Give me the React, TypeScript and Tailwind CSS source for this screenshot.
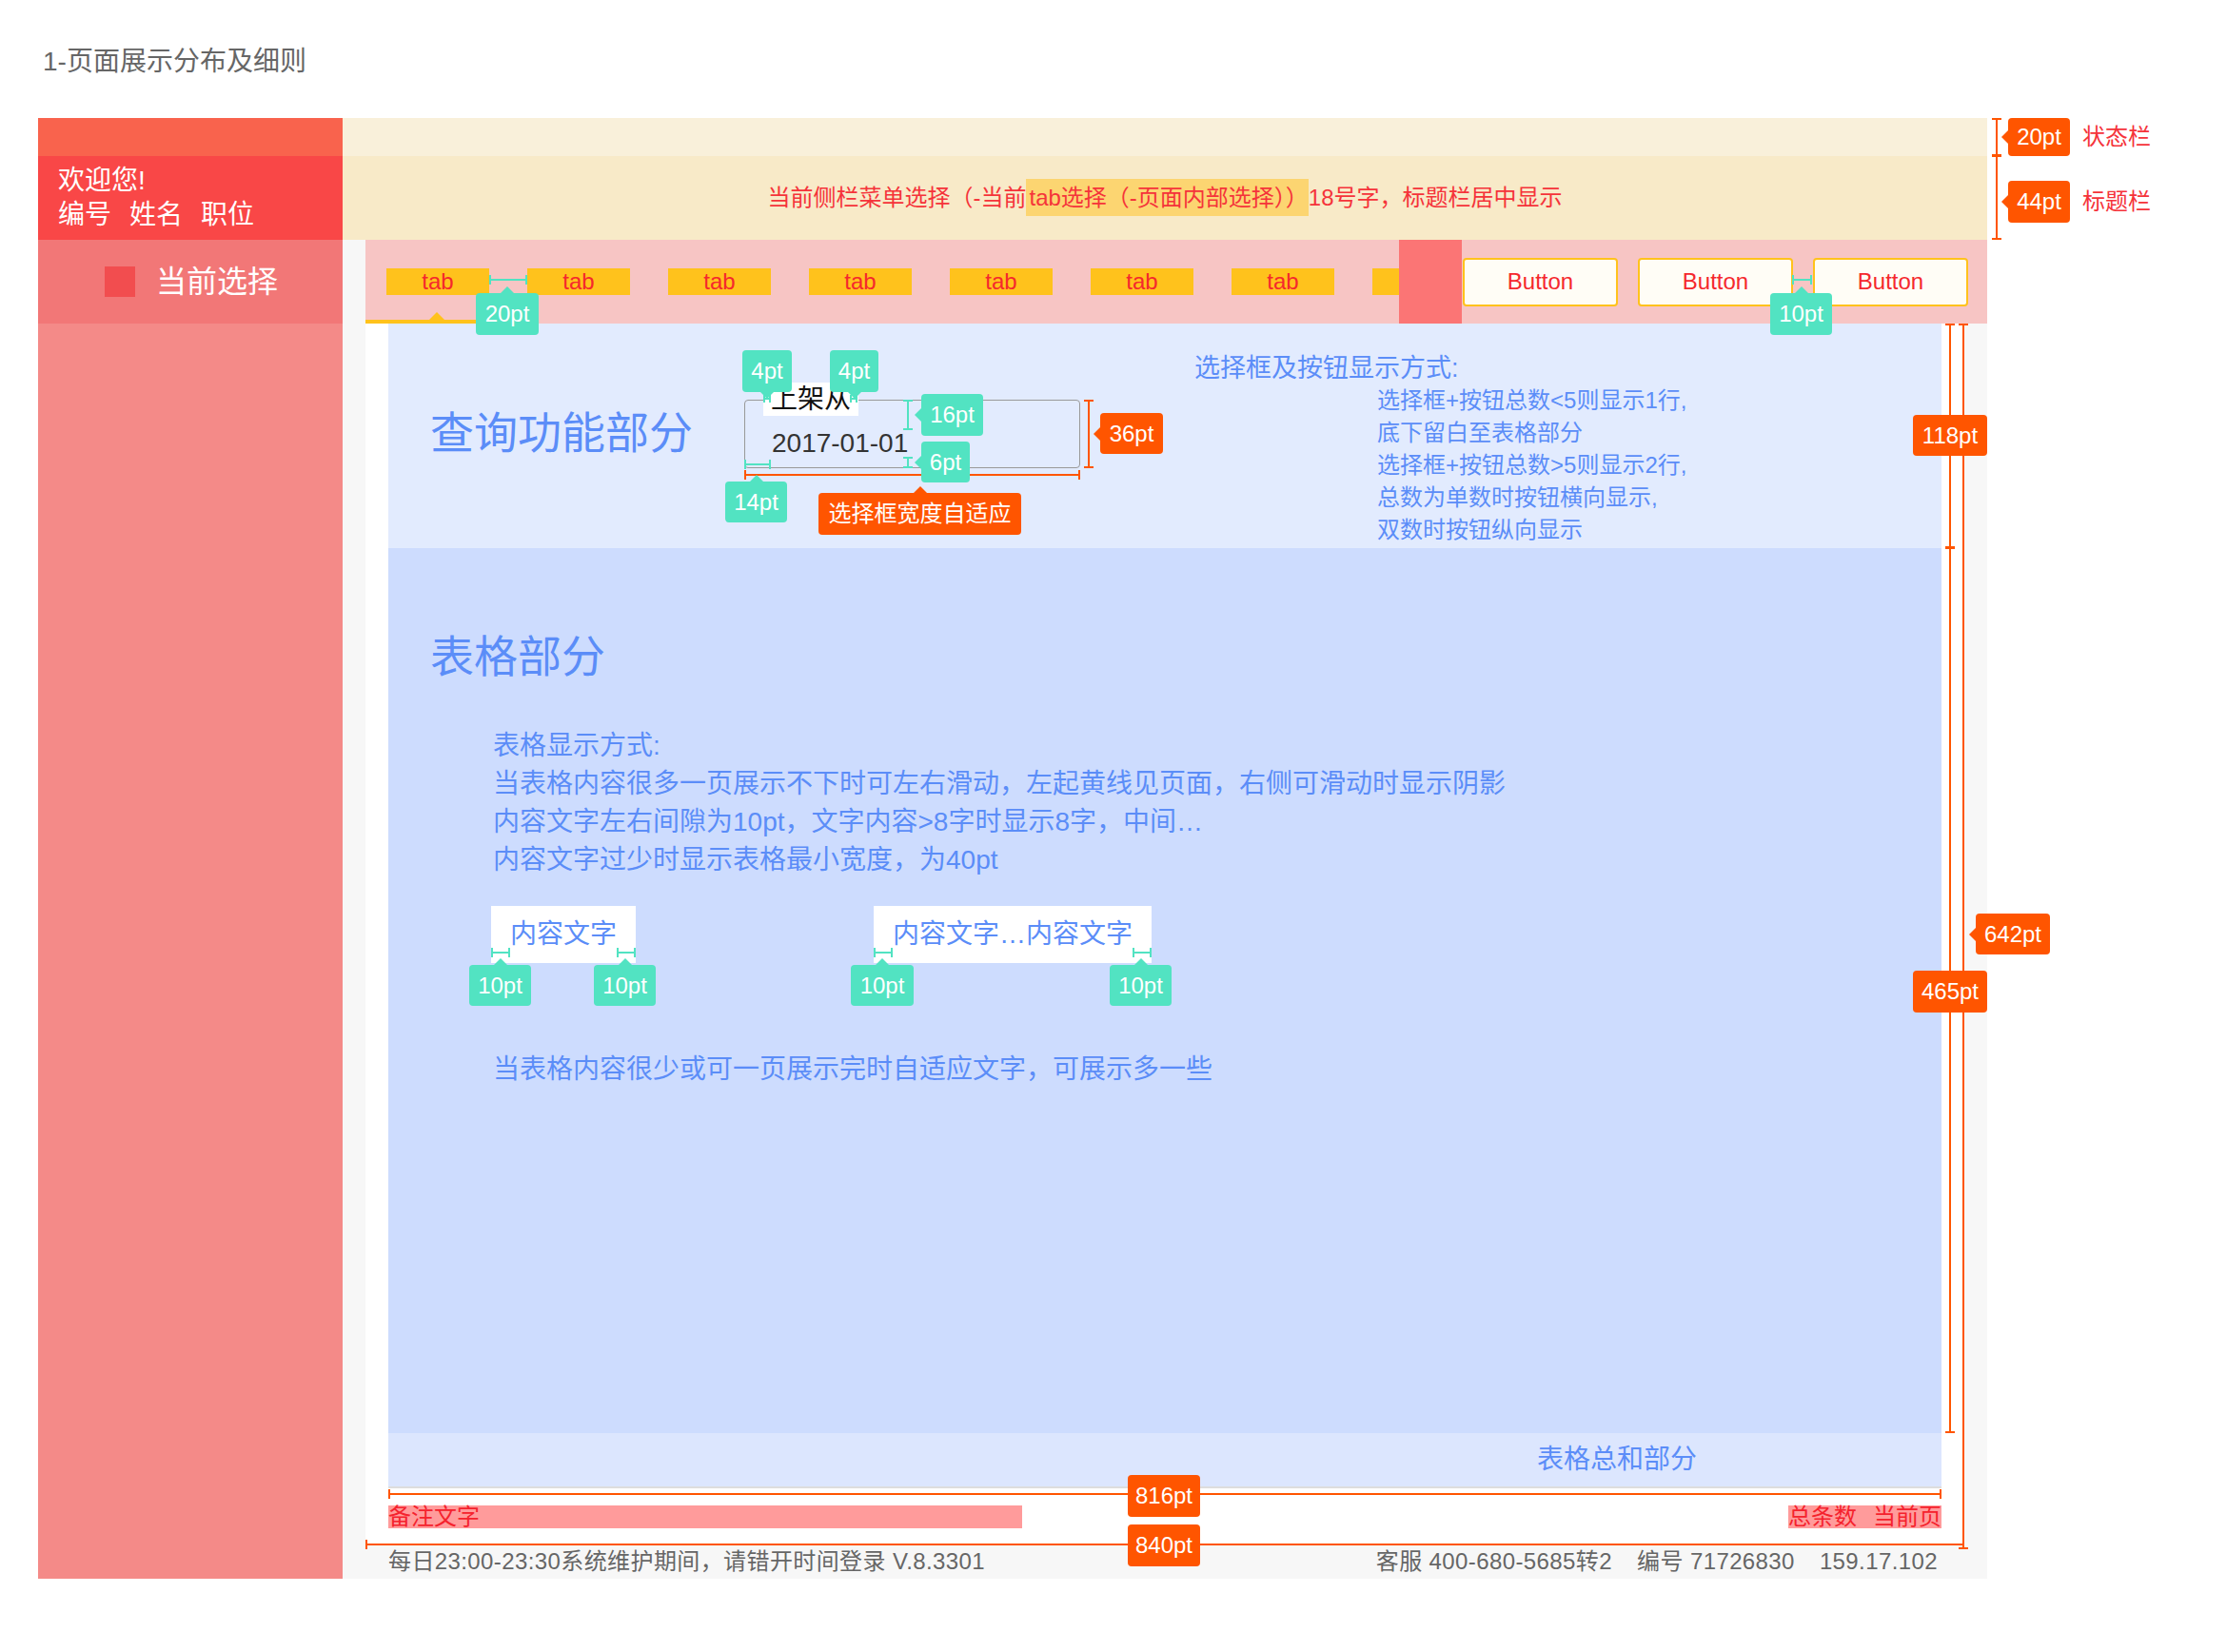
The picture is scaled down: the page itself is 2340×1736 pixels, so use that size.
import clsx from 'clsx';

type Tone = 'teal' | 'orange';
type Side = 'top' | 'bottom' | 'left' | 'none';

// measurement label
function Tag({ text, tone, side = 'none', className }: { text: string; tone: Tone; side?: Side; className: string }) {
  const teal = tone === 'teal';
  return (
    <div
      className={clsx(
        'absolute z-20 flex items-center justify-center rounded-[4px] text-[24px] leading-none text-white',
        teal ? 'bg-[#52E3C2]' : 'bg-[#FF5500]',
        className,
      )}
    >
      {text}
      {side === 'top' && (
        <span className={clsx('absolute left-1/2 top-[-7px] -translate-x-1/2 border-x-[7px] border-b-[7px] border-x-transparent', teal ? 'border-b-[#52E3C2]' : 'border-b-[#FF5500]')} />
      )}
      {side === 'bottom' && (
        <span className={clsx('absolute bottom-[-7px] left-1/2 -translate-x-1/2 border-x-[7px] border-t-[7px] border-x-transparent', teal ? 'border-t-[#52E3C2]' : 'border-t-[#FF5500]')} />
      )}
      {side === 'left' && (
        <span className={clsx('absolute left-[-7px] top-1/2 -translate-y-1/2 border-y-[7px] border-r-[7px] border-y-transparent', teal ? 'border-r-[#52E3C2]' : 'border-r-[#FF5500]')} />
      )}
    </div>
  );
}

// horizontal dimension line with end ticks
function HSpan({ tone, className }: { tone: Tone; className: string }) {
  const teal = tone === 'teal';
  return (
    <div className={clsx('absolute z-10 flex items-center border-x-2', teal ? 'border-[#52E3C2]' : 'border-[#FF5500]', className)}>
      <div className={clsx('h-[2px] w-full', teal ? 'bg-[#52E3C2]' : 'bg-[#FF5500]')} />
    </div>
  );
}

// vertical dimension line with end ticks
function VSpan({ tone, className }: { tone: Tone; className: string }) {
  const teal = tone === 'teal';
  return (
    <div className={clsx('absolute z-10 flex justify-center border-y-2', teal ? 'border-[#52E3C2]' : 'border-[#FF5500]', className)}>
      <div className={clsx('h-full w-[2px]', teal ? 'bg-[#52E3C2]' : 'bg-[#FF5500]')} />
    </div>
  );
}

export default function App() {
  return (
    <div className="relative h-[1736px] w-[2340px] overflow-hidden bg-white font-['Liberation_Sans','Noto_Sans_CJK_SC',sans-serif]">
      <h1 className="h-[124px] pl-[45px] pt-[49px] text-[28px] font-normal leading-[32px] text-[#666]">1-页面展示分布及细则</h1>

      <div className="ml-[40px] flex h-[1535px] w-[2048px]">
        {/* Sidebar */}
        <aside className="flex w-[320px] flex-col text-white">
          <div className="h-[40px] bg-[#F9634D]" />
          <div className="flex h-[88px] flex-col justify-center bg-[#F94747] pl-[21px] text-[28px] leading-[36px]">
            <div>欢迎您!</div>
            <div className="flex gap-[19px]">
              <span>编号</span>
              <span>姓名</span>
              <span>职位</span>
            </div>
          </div>
          <div className="flex h-[88px] items-center gap-[22px] bg-[#F27777] pl-[70px]">
            <span className="h-[32px] w-[32px] bg-[#F24D4F]" />
            <span className="text-[32px] leading-none">当前选择</span>
          </div>
          <div className="flex-1 bg-[#F48A88]" />
        </aside>

        {/* Main */}
        <main className="flex flex-1 flex-col bg-[#F7F7F7]">
          <div className="h-[40px] bg-[#F9F0DA]" />
          <div className="flex h-[88px] items-center justify-center bg-[#F8EAC8]">
            <p className="text-[24px] leading-[24px] text-[#F5333A]">
              当前侧栏菜单选择（-当前
              <span className="bg-[#FCD571] py-[6px] pl-[3px]">tab选择（-页面内部选择））</span>
              18号字，标题栏居中显示
            </p>
          </div>

          {/* Tab bar */}
          <div className="ml-[24px] flex h-[88px] bg-[#F7C5C4]">
            <div className="relative flex w-[1086px] items-center gap-[40px] overflow-hidden pl-[22px]">
              {Array.from({ length: 7 }).map((_, i) => (
                <div key={i} className="flex h-[28px] w-[108px] shrink-0 items-center justify-center bg-[#FFC21C] text-[24px] leading-none text-[#F5282D]">
                  tab
                </div>
              ))}
              <div className="h-[28px] w-[28px] shrink-0 bg-[#FFC21C]" />
              <div className="absolute bottom-0 left-0 h-[4px] w-[146px] bg-[#FFC21C]" />
              <div className="absolute bottom-[4px] left-[67px] border-x-[8px] border-b-[8px] border-x-transparent border-b-[#FFC21C]" />
            </div>
            <div className="w-[66px] bg-[#FB7575]" />
            <div className="flex items-center gap-[21px] pl-[1px]">
              {['Button', 'Button', 'Button'].map((b, i) => (
                <button key={i} className="flex h-[51px] w-[163px] items-center justify-center rounded-[4px] border-2 border-[#FFC21C] bg-[#FFFDF6] text-[24px] leading-none text-[#F5282D]">
                  {b}
                </button>
              ))}
            </div>
          </div>

          {/* Body */}
          <div className="flex flex-1">
            <div className="ml-[24px] flex w-[1680px] flex-col bg-white px-[24px]">
              {/* Query */}
              <section className="flex h-[236px] shrink-0 items-start bg-[#E2EBFE] pl-[44px] text-[#5B8DF8]">
                <h2 className="mt-[92px] text-[46px] font-normal leading-[46px]">查询功能部分</h2>
                <div className="relative ml-[54px] mt-[80px] h-[72px] w-[353px] shrink-0 rounded-[4px] border border-[#999]">
                  <span className="absolute left-[19px] top-[-19px] bg-white px-[8px] text-[28px] leading-[35px] text-[#111]">上架从</span>
                  <span className="absolute left-[28px] top-[31px] text-[28px] leading-[28px] text-[#333]">2017-01-01</span>
                </div>
                <div className="ml-[120px] mt-[30px]">
                  <p className="text-[27px] leading-[34px]">选择框及按钮显示方式:</p>
                  <div className="ml-[192px] text-[24px] leading-[34px]">
                    <p>选择框+按钮总数&lt;5则显示1行,</p>
                    <p>底下留白至表格部分</p>
                    <p>选择框+按钮总数&gt;5则显示2行,</p>
                    <p>总数为单数时按钮横向显示,</p>
                    <p>双数时按钮纵向显示</p>
                  </div>
                </div>
              </section>

              {/* Table */}
              <section className="h-[930px] shrink-0 bg-[#CDDCFE] pl-[44px] text-[#5B8DF8]">
                <h2 className="pt-[91px] text-[46px] font-normal leading-[46px]">表格部分</h2>
                <div className="ml-[66px] mt-[51px] text-[28px] leading-[40px]">
                  <p>表格显示方式:</p>
                  <p>当表格内容很多一页展示不下时可左右滑动，左起黄线见页面，右侧可滑动时显示阴影</p>
                  <p>内容文字左右间隙为10pt，文字内容&gt;8字时显示8字，中间…</p>
                  <p>内容文字过少时显示表格最小宽度，为40pt</p>
                </div>
                <div className="ml-[64px] mt-[28px] flex gap-[250px]">
                  <div className="flex h-[60px] items-center bg-white px-[20px] text-[28px] leading-none">内容文字</div>
                  <div className="flex h-[60px] items-center bg-white px-[20px] text-[28px] leading-none">内容文字…内容文字</div>
                </div>
                <p className="ml-[66px] mt-[92px] text-[28px] leading-[40px]">当表格内容很少或可一页展示完时自适应文字，可展示多一些</p>
              </section>

              <div className="flex h-[56px] shrink-0 items-center justify-end bg-[#DCE6FE] pr-[257px] text-[28px] leading-none text-[#5B8DF8]">表格总和部分</div>
              <div className="h-[2px] shrink-0 bg-[#DDDDDD]" />

              <div className="flex items-start justify-between pt-[18px] text-[24px] leading-[24px] text-[#F5222D]">
                <div className="w-[666px] bg-[#FF9B9B]">备注文字</div>
                <div className="flex gap-[17px] bg-[#FF9B9B]">
                  <span>总条数</span>
                  <span>当前页</span>
                </div>
              </div>
            </div>
          </div>

          <footer className="flex h-[36px] items-center justify-between pl-[48px] pr-[52px] text-[24px] leading-none text-[#666]">
            <span className="tracking-[0.4px]">每日23:00-23:30系统维护期间，请错开时间登录 V.8.3301</span>
            <div className="flex gap-[26px] tracking-[0.4px]">
              <span>客服 400-680-5685转2</span>
              <span>编号 71726830</span>
              <span>159.17.102</span>
            </div>
          </footer>
        </main>
      </div>

      {/* right-side notes */}
      <span className="absolute left-[2188px] top-[130px] text-[24px] leading-[28px] text-[#F5333A]">状态栏</span>
      <span className="absolute left-[2188px] top-[198px] text-[24px] leading-[28px] text-[#F5333A]">标题栏</span>

      {/* teal dimension lines */}
      <HSpan tone="teal" className="left-[514px] top-[289px] h-[10px] w-[40px]" />
      <HSpan tone="teal" className="left-[1883px] top-[289px] h-[10px] w-[21px]" />
      <HSpan tone="teal" className="left-[802px] top-[415px] h-[8px] w-[8px]" />
      <HSpan tone="teal" className="left-[893px] top-[415px] h-[8px] w-[8px]" />
      <HSpan tone="teal" className="left-[782px] top-[483px] h-[10px] w-[28px]" />
      <HSpan tone="teal" className="left-[516px] top-[996px] h-[10px] w-[20px]" />
      <HSpan tone="teal" className="left-[648px] top-[996px] h-[10px] w-[20px]" />
      <HSpan tone="teal" className="left-[918px] top-[996px] h-[10px] w-[20px]" />
      <HSpan tone="teal" className="left-[1190px] top-[996px] h-[10px] w-[20px]" />
      <VSpan tone="teal" className="left-[949px] top-[420px] h-[32px] w-[10px]" />
      <VSpan tone="teal" className="left-[949px] top-[480px] h-[12px] w-[10px]" />

      {/* orange dimension lines */}
      <HSpan tone="orange" className="left-[782px] top-[494px] h-[10px] w-[353px]" />
      <HSpan tone="orange" className="left-[408px] top-[1565px] h-[10px] w-[1632px]" />
      <HSpan tone="orange" className="left-[384px] top-[1618px] h-[10px] w-[1680px]" />
      <VSpan tone="orange" className="left-[2093px] top-[124px] h-[40px] w-[10px]" />
      <VSpan tone="orange" className="left-[2093px] top-[163px] h-[89px] w-[10px]" />
      <VSpan tone="orange" className="left-[1139px] top-[420px] h-[72px] w-[10px]" />
      <VSpan tone="orange" className="left-[2044px] top-[340px] h-[236px] w-[10px]" />
      <VSpan tone="orange" className="left-[2044px] top-[575px] h-[931px] w-[10px]" />
      <VSpan tone="orange" className="left-[2058px] top-[340px] h-[1288px] w-[10px]" />

      {/* teal tags */}
      <Tag tone="teal" side="top" text="20pt" className="left-[500px] top-[308px] h-[44px] w-[66px]" />
      <Tag tone="teal" side="top" text="10pt" className="left-[1860px] top-[308px] h-[44px] w-[65px]" />
      <Tag tone="teal" side="bottom" text="4pt" className="left-[780px] top-[368px] h-[44px] w-[52px]" />
      <Tag tone="teal" side="bottom" text="4pt" className="left-[872px] top-[368px] h-[44px] w-[51px]" />
      <Tag tone="teal" side="left" text="16pt" className="left-[968px] top-[414px] h-[44px] w-[65px]" />
      <Tag tone="teal" side="left" text="6pt" className="left-[968px] top-[464px] h-[43px] w-[51px]" />
      <Tag tone="teal" side="top" text="14pt" className="left-[762px] top-[506px] h-[43px] w-[65px]" />
      <Tag tone="teal" side="top" text="10pt" className="left-[493px] top-[1014px] h-[43px] w-[65px]" />
      <Tag tone="teal" side="top" text="10pt" className="left-[624px] top-[1014px] h-[43px] w-[65px]" />
      <Tag tone="teal" side="top" text="10pt" className="left-[894px] top-[1014px] h-[43px] w-[66px]" />
      <Tag tone="teal" side="top" text="10pt" className="left-[1166px] top-[1014px] h-[43px] w-[65px]" />

      {/* orange tags */}
      <Tag tone="orange" side="left" text="20pt" className="left-[2110px] top-[124px] h-[40px] w-[65px]" />
      <Tag tone="orange" side="left" text="44pt" className="left-[2110px] top-[190px] h-[44px] w-[65px]" />
      <Tag tone="orange" side="left" text="36pt" className="left-[1156px] top-[434px] h-[43px] w-[66px]" />
      <Tag tone="orange" side="top" text="选择框宽度自适应" className="left-[860px] top-[518px] h-[44px] w-[213px]" />
      <Tag tone="orange" text="118pt" className="left-[2010px] top-[436px] h-[43px] w-[78px]" />
      <Tag tone="orange" text="465pt" className="left-[2010px] top-[1020px] h-[44px] w-[78px]" />
      <Tag tone="orange" side="left" text="642pt" className="left-[2076px] top-[960px] h-[43px] w-[78px]" />
      <Tag tone="orange" text="816pt" className="left-[1185px] top-[1550px] h-[44px] w-[76px]" />
      <Tag tone="orange" text="840pt" className="left-[1185px] top-[1602px] h-[44px] w-[76px]" />
    </div>
  );
}
